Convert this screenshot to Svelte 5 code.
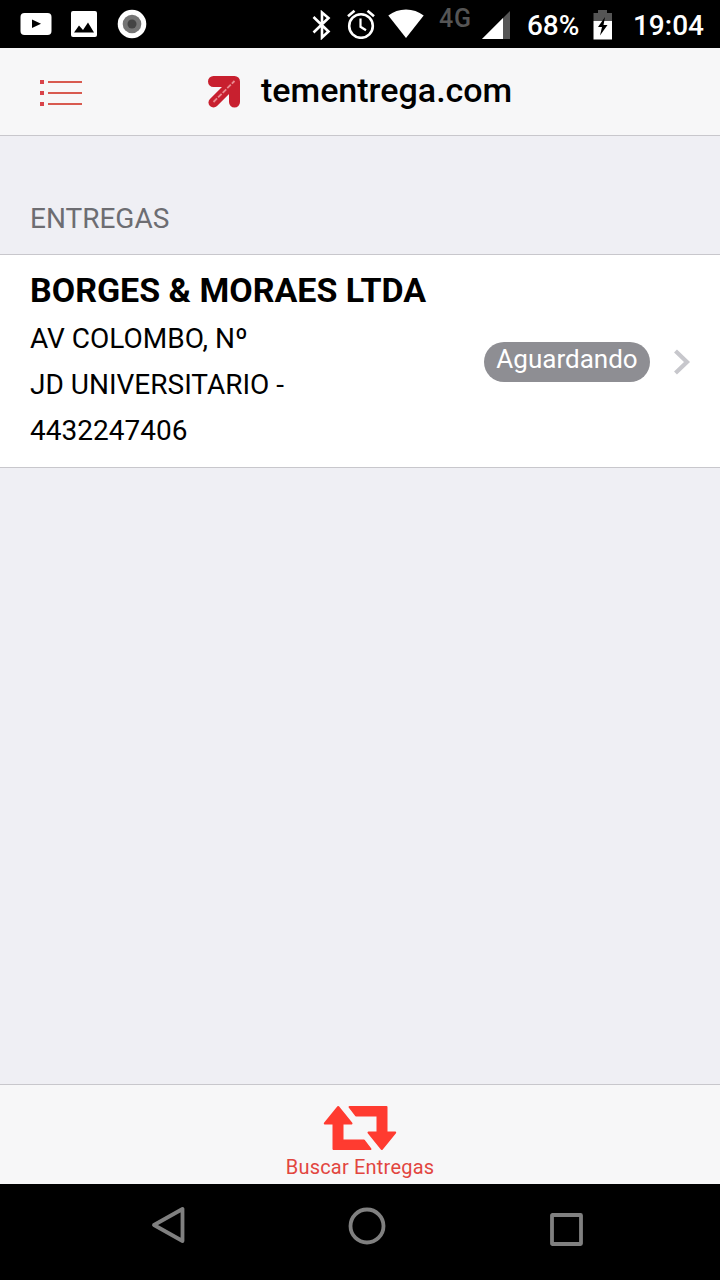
<script lang="ts">
  interface Delivery {
    name: string;
    lines: string[];
    status: string;
  }

  const deliveries: Delivery[] = [
    {
      name: 'BORGES & MORAES LTDA',
      lines: ['AV COLOMBO, Nº', 'JD UNIVERSITARIO -', '4432247406'],
      status: 'Aguardando',
    },
  ];
</script>

<div class="screen">
  <div class="status-bar">
    <div class="notifications">
      <svg width="32" height="24" viewBox="0 0 32 24">
        <rect x="0.5" y="1" width="31" height="22" rx="4" fill="#fff" />
        <path d="M12 7.5v8.5l9-4.300z" fill="#000" />
      </svg>
      <svg width="26" height="26" viewBox="0 0 26 26">
        <rect width="26" height="26" rx="2" fill="#fff" />
        <path d="M3 21.500l5-7 4 4.500 5-7.500 6 10z" fill="#000" />
      </svg>
      <svg class="record" width="30" height="30" viewBox="0 0 30 30">
        <circle cx="15" cy="15" r="14.300" fill="#fff" />
        <circle cx="15" cy="15" r="9.300" fill="#757575" />
        <circle cx="15" cy="15" r="4.500" fill="#444" />
      </svg>
    </div>

    <div class="indicators">
      <svg class="bluetooth" width="20" height="30" viewBox="0 0 20 30">
        <path d="M1.500 7l15 14.500-6.500 6V2.500l6.500 5.500L1.500 22.500" fill="none" stroke="#fff" stroke-width="2.600" />
      </svg>
      <svg class="alarm" width="30" height="30" viewBox="0 0 30 30">
        <circle cx="15" cy="17" r="11.800" fill="none" stroke="#fff" stroke-width="2.600" />
        <path d="M14.500 9.500v8.300l5.500 3.400" fill="none" stroke="#fff" stroke-width="2.200" />
        <path d="M2 7.300l6.500-5.600M28 7.300l-6.500-5.600" stroke="#fff" stroke-width="2.600" />
      </svg>
      <svg class="wifi" width="36" height="30" viewBox="0 0 36 30">
        <path d="M18 29L0.300 6.500Q8 0.500 18 0.500t17.700 6z" fill="#fff" />
      </svg>
      <span class="network">4G</span>
      <svg class="signal" width="28" height="28" viewBox="0 0 28 28">
        <path d="M28 0v28H0z" fill="#555" />
        <path d="M21 7v21H0z" fill="#fff" />
      </svg>
      <span class="percent">68%</span>
      <svg class="battery" width="20" height="30" viewBox="0 0 20 30">
        <path d="M0.500 11V3H5V0h9v3h5v8z" fill="#555" />
        <path d="M0.500 11h18.500v18.500H0.500z" fill="#fff" />
        <path d="M12 7L5 17h4l-2 8.500 7.500-10.500h-4z" fill="#000" />
      </svg>
      <span class="clock">19:04</span>
    </div>
  </div>

  <header class="navbar">
    <button class="menu" aria-label="Menu">
      <svg width="44" height="28" viewBox="0 0 44 28">
        {#each [1, 12, 23] as y}
          <rect x="1" {y} width="4" height="4" fill="#d9434a" />
          <rect x="9" y={y + 1} width="34" height="2" fill="#d85a50" />
        {/each}
      </svg>
    </button>
    <div class="brand">
      <svg width="34" height="34" viewBox="0 0 34 34">
        <g fill="none" stroke="#c8202f" stroke-linecap="round" stroke-linejoin="round">
          <path d="M6.500 6.500h21v20.500" stroke-width="11" />
          <path d="M6.500 27.500L25 9" stroke-width="10" />
        </g>
        <path d="M6.500 27L27.500 6" stroke="#ea8c92" stroke-width="1.800" stroke-dasharray="5 1.500" />
      </svg>
      <h1>tementrega.com</h1>
    </div>
  </header>

  <main>
    <h2>ENTREGAS</h2>
    <ul>
      {#each deliveries as delivery}
        <li>
          <div class="info">
            <strong>{delivery.name}</strong>
            {#each delivery.lines as line}
              <p>{line}</p>
            {/each}
          </div>
          <span class="badge">{delivery.status}</span>
          <svg class="chevron" width="18" height="28" viewBox="0 0 18 28">
            <path d="M2.500 3L14 14 2.500 25" fill="none" stroke="#c7c7cc" stroke-width="4.200" />
          </svg>
        </li>
      {/each}
    </ul>
  </main>

  <footer class="toolbar">
    <svg width="74" height="46" viewBox="0 0 74 46">
      <g fill="#ff3b30" stroke="#ff3b30" stroke-width="2" stroke-linejoin="round">
        <path d="M15.200 2L28.500 18.500H19.500V35.500H41L47.500 44H10.500V18.500H1.800z" />
        <path d="M58.800 44L45.500 27.500h9V10.500H33L26.500 2h37v25.500h8.700z" />
      </g>
    </svg>
    <span>Buscar Entregas</span>
  </footer>

  <nav class="system-nav">
    <svg width="34" height="40" viewBox="0 0 34 40">
      <path d="M31.500 4v32L3 20z" />
    </svg>
    <svg class="home" width="40" height="40" viewBox="0 0 40 40">
      <circle cx="20" cy="20" r="16.500" />
    </svg>
    <svg class="recent" width="36" height="36" viewBox="0 0 36 36">
      <rect x="3" y="3" width="29" height="29" rx="0.500" />
    </svg>
  </nav>
</div>

<style>
  :global(body) {
    background: #000;
  }

  .screen {
    display: flex;
    flex-direction: column;
    width: 720px;
    height: 1280px;
    overflow: hidden;
    background: #efeff4;
    color: #000;
    font-family: Roboto, sans-serif;
  }

  svg {
    display: block;
    flex-shrink: 0;
  }

  h1,
  h2,
  p,
  ul {
    margin: 0;
    padding: 0;
  }

  .status-bar {
    display: flex;
    justify-content: space-between;
    height: 48px;
    padding: 0 16px 0 20px;
    background: #000;
    color: #fff;
  }

  .notifications {
    display: flex;
    align-items: center;
    gap: 19px;
  }

  .record {
    margin-left: 1px;
  }

  .indicators {
    display: flex;
    align-items: flex-start;
    padding-top: 10px;
    font-size: 28px;
    font-weight: 500;
    line-height: 30px;
    white-space: nowrap;
  }

  .bluetooth {
    margin-right: 14px;
  }

  .alarm {
    margin-top: -1px;
    margin-right: 12px;
  }

  .wifi {
    margin-top: -1px;
    margin-right: 15px;
  }

  .network {
    width: 43px;
    margin-top: -6px;
    color: #555;
    font-size: 25px;
    letter-spacing: 0.8px;
  }

  .signal {
    margin-top: 1px;
    margin-right: 17px;
  }

  .percent {
    width: 66px;
  }

  .percent,
  .clock {
    padding-top: 1px;
  }

  .battery {
    margin-right: 20px;
  }

  .navbar {
    display: flex;
    align-items: center;
    height: 87px;
    padding-left: 39px;
    border-bottom: 1px solid #c8c7cc;
    background: #f7f7f8;
  }

  .menu {
    padding: 2px 0 0;
    border: 0;
    background: none;
  }

  .brand {
    display: flex;
    align-items: center;
    gap: 20px;
    margin-left: 124px;
  }

  h1 {
    padding-bottom: 3px;
    font-size: 34px;
    font-weight: 500;
    line-height: 40px;
  }

  main {
    flex: 1;
  }

  h2 {
    padding: 67px 30px 19px;
    color: #6d6d72;
    font-size: 28px;
    font-weight: 400;
    line-height: 32px;
  }

  ul {
    border-top: 1px solid #c8c7cc;
    border-bottom: 1px solid #c8c7cc;
    background: #fff;
    list-style: none;
  }

  li {
    display: flex;
    align-items: center;
    height: 212px;
    padding: 0 29px 0 30px;
  }

  .info {
    flex: 1;
    padding-bottom: 3px;
  }

  .info strong {
    display: block;
    margin-bottom: 1px;
    font-size: 34px;
    line-height: 50px;
  }

  .info p {
    font-size: 28px;
    line-height: 46px;
  }

  .badge {
    width: 166px;
    height: 40px;
    margin-top: 2px;
    margin-right: 23px;
    border-radius: 20px;
    background: #8e8e93;
    color: #fff;
    font-size: 26px;
    line-height: 35px;
    text-align: center;
  }

  .chevron {
    margin-top: 2px;
  }

  .toolbar {
    display: flex;
    flex-direction: column;
    align-items: center;
    height: 100px;
    padding-top: 20px;
    box-sizing: border-box;
    border-top: 1px solid #c8c7cc;
    background: #f7f7f8;
  }

  .toolbar span {
    margin-top: 4px;
    color: #e2463f;
    font-size: 20px;
    letter-spacing: 0.2px;
    line-height: 24px;
  }

  .system-nav {
    display: flex;
    align-items: flex-start;
    justify-content: space-between;
    height: 96px;
    padding: 21px 135px 0 151px;
    box-sizing: border-box;
    background: #000;
    fill: none;
    stroke: #808080;
    stroke-width: 3.8;
    stroke-linejoin: round;
  }

  .home {
    margin-top: 1px;
  }

  .recent {
    margin-top: 7px;
  }
</style>
